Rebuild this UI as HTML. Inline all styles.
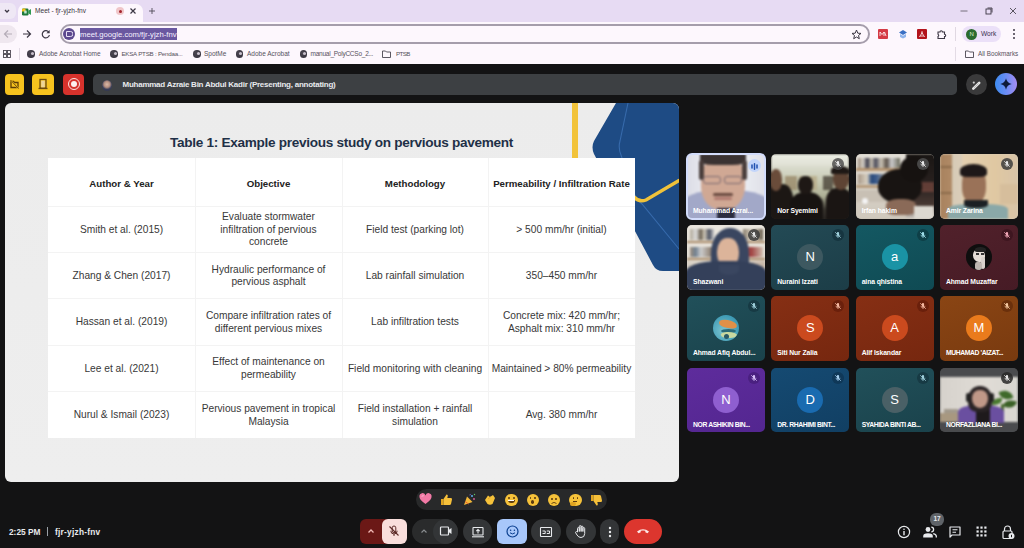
<!DOCTYPE html>
<html><head><meta charset="utf-8">
<style>
*{margin:0;padding:0;box-sizing:border-box}
html,body{width:1024px;height:548px;overflow:hidden;background:#131314;font-family:"Liberation Sans",sans-serif}
.a{position:absolute}
#tabstrip{left:0;top:0;width:1024px;height:22px;background:#e7dbf3}
#toolbar{left:0;top:22px;width:1024px;height:22px;background:#fdf7fd}
#bookmarks{left:0;top:44px;width:1024px;height:20px;background:#fdf7fd}
#meet{left:0;top:64px;width:1024px;height:484px;background:#131314}
.bm{font-size:7px;color:#56515c;top:50px;white-space:nowrap}
.globe{width:7.5px;height:7.5px;border-radius:50%;background:radial-gradient(circle at 35% 35%,#4a4550 0,#3c3844 60%);top:50px;overflow:hidden}
.globe::after{content:"";position:absolute;left:3.5px;top:1.5px;width:3px;height:3px;border-radius:50%;background:#c8c0cc}
.th,.td{display:flex;align-items:center;justify-content:center;text-align:center;white-space:nowrap;padding-top:2.6px}
.th span{font-size:9.7px;font-weight:bold;color:#222}
.td span{font-size:10.2px;color:#383838;line-height:12.8px}
.tile{width:78px;height:64.5px;border-radius:5px}
.av{left:26px;top:19.25px;width:26px;height:26px;border-radius:50%;font-size:13px;text-align:center;line-height:26px}
.mute{right:5px;top:4px;width:12px;height:12px;border-radius:50%;display:flex;align-items:center;justify-content:center}
.tname{left:6px;top:53.3px;font-size:6.8px;font-weight:bold;color:#fff;white-space:nowrap;letter-spacing:-0.1px}
.up{letter-spacing:-0.4px}
.emo{top:493.5px;width:12.5px;height:12.5px;border-radius:50%;background:#f6c23a}
</style></head><body>
<!-- TAB STRIP -->
<div id="tabstrip" class="a"></div>
<div class="a" style="left:0;top:3px;width:16px;height:16px;border-radius:0 6px 6px 0;background:#efe8f5"></div>
<svg class="a" style="left:3px;top:7px" width="8" height="8" viewBox="0 0 8 8"><path d="M2 3 L4 5 L6 3" stroke="#3c3744" stroke-width="1.3" fill="none"/></svg>
<div class="a" style="left:18px;top:4px;width:125px;height:18px;background:#fdf7fd;border-radius:7px 7px 0 0"></div>
<!-- meet icon -->
<svg class="a" style="left:22px;top:7.5px" width="9" height="8" viewBox="0 0 9 8"><rect x="0" y=".5" width="6.5" height="7" rx="1.2" fill="#1e7a3c"/><path d="M0 3.5V1.7Q0 .5 1.2 .5H3.5V3.5Z" fill="#f2c21b"/><path d="M6.3 2.8L9 1V7L6.3 5.2Z" fill="#2f9a50"/><rect x="2.2" y="2.6" width="2.5" height="2.8" rx=".5" fill="#cfeedd" opacity=".9"/></svg>
<div class="a" style="left:35px;top:6.5px;font-size:6.6px;color:#3b3640;white-space:nowrap">Meet - fjr-yjzh-fnv</div>
<div class="a" style="left:116px;top:7px;width:8px;height:8px;border-radius:50%;background:#f0c6c9"></div>
<div class="a" style="left:118.5px;top:9.5px;width:3px;height:3px;border-radius:50%;background:#a3232c"></div>
<svg class="a" style="left:129px;top:7px" width="8" height="8" viewBox="0 0 8 8"><path d="M1.5 1.5L6.5 6.5M6.5 1.5L1.5 6.5" stroke="#3c3744" stroke-width="1.2"/></svg>
<svg class="a" style="left:148px;top:7px" width="8" height="8" viewBox="0 0 8 8"><path d="M4 1V7M1 4H7" stroke="#4a4550" stroke-width=".85"/></svg>
<!-- window controls -->
<svg class="a" style="left:959px;top:6px" width="10" height="10" viewBox="0 0 10 10"><path d="M1.5 5H8.5" stroke="#6a6470" stroke-width=".9"/></svg>
<svg class="a" style="left:984px;top:6px" width="10" height="10" viewBox="0 0 10 10"><rect x="2" y="3" width="5" height="5" stroke="#3c3744" fill="none" stroke-width=".9"/><path d="M3.5 2H8V6.5" stroke="#3c3744" fill="none" stroke-width=".9"/></svg>
<svg class="a" style="left:1008px;top:6px" width="10" height="10" viewBox="0 0 10 10"><path d="M2 2L8 8M8 2L2 8" stroke="#4a4550" stroke-width=".9"/></svg>

<!-- TOOLBAR -->
<div id="toolbar" class="a"></div>
<div class="a" style="left:0;top:25px;width:17px;height:18px;border-radius:0 9px 9px 0;background:#efe7ef"></div>
<svg class="a" style="left:3px;top:29px" width="10" height="10" viewBox="0 0 10 10"><path d="M9 5H1.5M5 1.5L1.5 5L5 8.5" stroke="#b5adb8" stroke-width="1.2" fill="none"/></svg>
<svg class="a" style="left:22px;top:29px" width="10" height="10" viewBox="0 0 10 10"><path d="M1 5H8.5M5 1.5L8.5 5L5 8.5" stroke="#3c3744" stroke-width="1.2" fill="none"/></svg>
<svg class="a" style="left:41px;top:29px" width="10" height="10" viewBox="0 0 10 10"><path d="M8 3.5A3.6 3.6 0 1 0 8.4 6" stroke="#3c3744" stroke-width="1.2" fill="none"/><path d="M8.6 1V4.2H5.4" fill="#3c3744"/></svg>
<div class="a" style="left:60px;top:24px;width:810px;height:20px;border-radius:10px;border:2px solid #a59dab;background:#fdf7fd"></div>
<div class="a" style="left:63px;top:28px;width:12px;height:12px;border-radius:50%;background:#5d4a8f"></div>
<svg class="a" style="left:65px;top:30px" width="8" height="8" viewBox="0 0 8 8"><path d="M1.5 1.5H5.5A2.5 2.5 0 0 1 5.5 6.5H1.5Z" stroke="#e8e0f5" stroke-width="1" fill="none"/></svg>
<div class="a" style="left:80px;top:28px;width:97px;height:12px;background:#6a58a0"></div>
<div class="a" style="left:80px;top:29.5px;font-size:7.7px;color:#f5f0ff;white-space:nowrap">meet.google.com/fjr-yjzh-fnv</div>
<svg class="a" style="left:851px;top:29px" width="11" height="11" viewBox="0 0 11 11"><path d="M5.5 1L6.8 4.2L10 4.4L7.5 6.5L8.3 9.7L5.5 8L2.7 9.7L3.5 6.5L1 4.4L4.2 4.2Z" stroke="#3c3744" stroke-width="1" fill="none" stroke-linejoin="round"/></svg>
<div class="a" style="left:878px;top:29px;width:10px;height:10px;background:#d43a45;border-radius:1px"></div>
<svg class="a" style="left:879px;top:31px" width="8" height="6" viewBox="0 0 8 6"><path d="M1 5V1L3 3.5L5 1V5M5.5 1L7 5" stroke="#fff" stroke-width=".8" fill="none"/></svg>
<svg class="a" style="left:898px;top:29px" width="10" height="10" viewBox="0 0 10 10"><path d="M5 1L9 3.5L5 6L1 3.5Z" fill="#3a6fc4"/><path d="M2 5V8L5 9.5L8 8V5L5 6.7Z" fill="#8fb4ec"/></svg>
<div class="a" style="left:917px;top:29px;width:10px;height:10px;background:#b3141c;border-radius:1px"></div>
<svg class="a" style="left:918px;top:30px" width="8" height="8" viewBox="0 0 8 8"><path d="M1.5 6.5C3 5 4 3 4 1.5C4 3 5 5 6.5 6.5C5 5.8 3 5.8 1.5 6.5Z" stroke="#fff" stroke-width=".8" fill="none"/></svg>
<svg class="a" style="left:936px;top:29px" width="11" height="11" viewBox="0 0 11 11"><path d="M2 3H4A1.2 1.2 0 0 1 6.4 3H8.5V5.2A1.2 1.2 0 0 1 8.5 7.6V9.5H2V7.4A1.2 1.2 0 0 0 2 5.2Z" stroke="#3c3744" stroke-width="1.1" fill="none"/></svg>
<div class="a" style="left:955px;top:27px;width:1px;height:14px;background:#e0d8e2"></div>
<div class="a" style="left:962px;top:26px;width:39px;height:16px;border-radius:8px;background:#ebe0f8"></div>
<div class="a" style="left:966px;top:29px;width:11px;height:11px;border-radius:50%;background:#2b6a2f"></div>
<div class="a" style="left:969.5px;top:31px;font-size:6px;color:#d7f0d0">N</div>
<div class="a" style="left:981px;top:30px;font-size:6.6px;color:#3a3150;white-space:nowrap">Work</div>
<svg class="a" style="left:1011px;top:28px" width="6" height="12" viewBox="0 0 6 12"><circle cx="3" cy="2" r="1" fill="#3c3744"/><circle cx="3" cy="6" r="1" fill="#3c3744"/><circle cx="3" cy="10" r="1" fill="#3c3744"/></svg>

<!-- BOOKMARKS -->
<div id="bookmarks" class="a"></div>
<svg class="a" style="left:3px;top:50px" width="8" height="8" viewBox="0 0 8 8"><rect x=".5" y=".5" width="3" height="3" stroke="#4a4550" stroke-width=".9" fill="none"/><rect x="4.5" y=".5" width="3" height="3" stroke="#4a4550" stroke-width=".9" fill="none"/><rect x=".5" y="4.5" width="3" height="3" stroke="#4a4550" stroke-width=".9" fill="none"/><rect x="4.5" y="4.5" width="3" height="3" stroke="#4a4550" stroke-width=".9" fill="none"/></svg>
<div class="a" style="left:19px;top:48px;width:1px;height:12px;background:#e3dbe5"></div>
<div class="a globe" style="left:27.3px"></div>
<div class="a bm" style="left:39px;font-size:6.47px">Adobe Acrobat Home</div>
<div class="a globe" style="left:110.3px"></div>
<div class="a bm" style="left:121.4px;font-size:6.2px;letter-spacing:-0.22px">EKSA PTSB : Pendaa...</div>
<div class="a globe" style="left:193px"></div>
<div class="a bm" style="left:204px;font-size:6.5px">SpotMe</div>
<div class="a globe" style="left:235.8px"></div>
<div class="a bm" style="left:247px;font-size:6.5px">Adobe Acrobat</div>
<div class="a globe" style="left:299.8px"></div>
<div class="a bm" style="left:310.6px;font-size:6.5px;letter-spacing:-0.25px">manual_PolyCCSo_2...</div>
<svg class="a" style="left:382px;top:50px" width="9" height="8" viewBox="0 0 9 8"><path d="M.5 1H3.5L4.5 2H8.5V7.5H.5Z" stroke="#4a4550" stroke-width=".9" fill="none"/></svg>
<div class="a bm" style="left:396px;font-size:6.2px;letter-spacing:-0.6px">PTSB</div>
<div class="a" style="left:955px;top:47px;width:1px;height:14px;background:#e3dbe5"></div>
<svg class="a" style="left:965px;top:50px" width="9" height="8" viewBox="0 0 9 8"><path d="M.5 1H3.5L4.5 2H8.5V7.5H.5Z" stroke="#4a4550" stroke-width=".9" fill="none"/></svg>
<div class="a bm" style="left:978px;font-size:6.3px">All Bookmarks</div>

<!-- MEET -->
<div id="meet" class="a"></div>
<div class="a" style="left:5px;top:73.5px;width:19px;height:21.5px;border-radius:4px;background:#f6c21e"></div>
<svg class="a" style="left:9px;top:78px" width="11" height="12" viewBox="0 0 11 12"><path d="M2 3.5H4.5L5.5 4.5H9V9.5H2Z" fill="none" stroke="#5a3c08" stroke-width="1.3"/><path d="M1.5 2L9.5 10.5" stroke="#f6c21e" stroke-width="1.6"/><path d="M1.5 2L9.5 10.5" stroke="#5a3c08" stroke-width=".9"/></svg>
<div class="a" style="left:32px;top:73.5px;width:22px;height:21.5px;border-radius:4px;background:#f6c21e"></div>
<svg class="a" style="left:37px;top:78px" width="12" height="12" viewBox="0 0 12 12"><rect x="3" y="1.5" width="6" height="8.5" fill="none" stroke="#6b4a10" stroke-width="1.3"/><rect x="4.2" y="2.6" width="3.6" height="6.8" fill="#ecd49a"/><path d="M1.5 10.5H10.5" stroke="#6b4a10" stroke-width="1.3"/></svg>
<div class="a" style="left:63px;top:73.5px;width:21px;height:21.5px;border-radius:4px;background:#d6322c"></div>
<div class="a" style="left:67.5px;top:78px;width:12px;height:12px;border-radius:50%;border:1.4px solid #fbe3e1"></div>
<div class="a" style="left:70.5px;top:81px;width:6px;height:6px;border-radius:50%;background:#fdf0ef"></div>

<div class="a" style="left:93px;top:74px;width:864px;height:21px;border-radius:5px;background:#3d4043"></div>
<div class="a" style="left:102px;top:79.5px;width:10px;height:11px;border-radius:50%;background:radial-gradient(circle at 50% 40%,#d9b9a8 0,#b58f80 35%,#3a3f5a 60%,#2c3048 100%)"></div>
<div id="pname" class="a" style="left:122.5px;top:80px;font-size:8px;letter-spacing:-0.25px;font-weight:bold;color:#e8eaed;white-space:nowrap">Muhammad Azraie Bin Abdul Kadir (Presenting, annotating)</div>

<div class="a" style="left:965.5px;top:74px;width:21px;height:21px;border-radius:50%;background:#3a3a3b"></div>
<svg class="a" style="left:968px;top:76.5px" width="16" height="16" viewBox="0 0 16 16"><path d="M5.3 11.6L11.2 5.9" stroke="#e6e6e6" stroke-width="2.6" stroke-linecap="round"/><path d="M6.2 10.7L10.3 6.8" stroke="#9a9a9a" stroke-width=".6" stroke-linecap="round"/><circle cx="5.8" cy="5.6" r="1.1" fill="#cfcfcf"/></svg>
<div class="a" style="left:995px;top:73px;width:22px;height:22px;border-radius:50%;background:linear-gradient(90deg,#3d8cf0 0%,#6a8df5 50%,#a58cf2 100%)"></div>
<svg class="a" style="left:999px;top:77px" width="14" height="14" viewBox="0 0 14 14"><path d="M7 1.3Q7.9 6.1 12.7 7Q7.9 7.9 7 12.7Q6.1 7.9 1.3 7Q6.1 6.1 7 1.3Z" fill="#0d1a3a"/></svg>

<!-- SLIDE -->
<div class="a" style="left:5px;top:103px;width:674px;height:379px;border-radius:6px;background:linear-gradient(180deg,#ececec 0%,#eeeeee 100%);overflow:hidden">
  <div class="a" style="left:567px;top:0;width:6px;height:56px;background:#f2c33a"></div>
  <svg class="a" style="left:560px;top:0" width="114" height="175" viewBox="0 0 114 175">
    <path d="M51 0 L114 0 L114 168 L98 168 Q91 168 88 162 L29 51 Q26 44 29 38 Z" fill="#1e4b84"/>
    <path d="M63 0 L55 38 Q53 45 56 52 L68 88 Q71 96 77 101 L114 146" stroke="#3f74b8" stroke-width="1.1" fill="none" opacity=".75"/>
    <path d="M69 94 Q74 99.5 81 97 L114 77.5" stroke="#f0c23a" stroke-width="3.4" fill="none" stroke-linecap="round"/>
  </svg>
  <div id="title" class="a" style="left:165px;top:31.5px;font-size:13.6px;letter-spacing:-0.3px;font-weight:bold;color:#1f3047;white-space:nowrap">Table 1: Example previous study on pervious pavement</div>
</div>
<div class="a" style="left:48px;top:158px;width:587px;height:279.5px;background:#fff"></div>
<!-- TABLE -->
<div class="a" style="left:195px;top:158px;width:1px;height:279.5px;background:#f3f3f3"></div>
<div class="a" style="left:342px;top:158px;width:1px;height:279.5px;background:#f3f3f3"></div>
<div class="a" style="left:488px;top:158px;width:1px;height:279.5px;background:#f3f3f3"></div>
<div class="a" style="left:48px;top:205.5px;width:587px;height:1px;background:#f3f3f3"></div>
<div class="a" style="left:48px;top:251.9px;width:587px;height:1px;background:#f3f3f3"></div>
<div class="a" style="left:48px;top:298.3px;width:587px;height:1px;background:#f3f3f3"></div>
<div class="a" style="left:48px;top:344.7px;width:587px;height:1px;background:#f3f3f3"></div>
<div class="a" style="left:48px;top:391.1px;width:587px;height:1px;background:#f3f3f3"></div>
<div class="a th" style="left:48px;top:158px;width:147px;height:47.5px"><span>Author &amp; Year</span></div>
<div class="a th" style="left:195px;top:158px;width:147px;height:47.5px"><span>Objective</span></div>
<div class="a th" style="left:342px;top:158px;width:146px;height:47.5px"><span>Methodology</span></div>
<div class="a th" style="left:488px;top:158px;width:147px;height:47.5px"><span>Permeability / Infiltration Rate</span></div>
<div class="a td" style="left:48px;top:205.5px;width:147px;height:46.4px"><span>Smith et al. (2015)</span></div>
<div class="a td" style="left:195px;top:205.5px;width:147px;height:46.4px"><span>Evaluate stormwater<br>infiltration of pervious<br>concrete</span></div>
<div class="a td" style="left:342px;top:205.5px;width:146px;height:46.4px"><span>Field test (parking lot)</span></div>
<div class="a td" style="left:488px;top:205.5px;width:147px;height:46.4px"><span>&gt; 500 mm/hr (initial)</span></div>
<div class="a td" style="left:48px;top:251.9px;width:147px;height:46.4px"><span>Zhang &amp; Chen (2017)</span></div>
<div class="a td" style="left:195px;top:251.9px;width:147px;height:46.4px"><span>Hydraulic performance of<br>pervious asphalt</span></div>
<div class="a td" style="left:342px;top:251.9px;width:146px;height:46.4px"><span>Lab rainfall simulation</span></div>
<div class="a td" style="left:488px;top:251.9px;width:147px;height:46.4px"><span>350–450 mm/hr</span></div>
<div class="a td" style="left:48px;top:298.3px;width:147px;height:46.4px"><span>Hassan et al. (2019)</span></div>
<div class="a td" style="left:195px;top:298.3px;width:147px;height:46.4px"><span>Compare infiltration rates of<br>different pervious mixes</span></div>
<div class="a td" style="left:342px;top:298.3px;width:146px;height:46.4px"><span>Lab infiltration tests</span></div>
<div class="a td" style="left:488px;top:298.3px;width:147px;height:46.4px"><span>Concrete mix: 420 mm/hr;<br>Asphalt mix: 310 mm/hr</span></div>
<div class="a td" style="left:48px;top:344.7px;width:147px;height:46.4px"><span>Lee et al. (2021)</span></div>
<div class="a td" style="left:195px;top:344.7px;width:147px;height:46.4px"><span>Effect of maintenance on<br>permeability</span></div>
<div class="a td" style="left:342px;top:344.7px;width:146px;height:46.4px"><span>Field monitoring with cleaning</span></div>
<div class="a td" style="left:488px;top:344.7px;width:147px;height:46.4px"><span>Maintained &gt; 80% permeability</span></div>
<div class="a td" style="left:48px;top:391.1px;width:147px;height:46.4px"><span>Nurul &amp; Ismail (2023)</span></div>
<div class="a td" style="left:195px;top:391.1px;width:147px;height:46.4px"><span>Pervious pavement in tropical<br>Malaysia</span></div>
<div class="a td" style="left:342px;top:391.1px;width:146px;height:46.4px"><span>Field installation + rainfall<br>simulation</span></div>
<div class="a td" style="left:488px;top:391.1px;width:147px;height:46.4px"><span>Avg. 380 mm/hr</span></div>
<!-- BOTTOM -->
<div class="a" style="left:9px;top:526.5px;font-size:8.3px;font-weight:bold;color:#e8eaed;white-space:nowrap">2:25 PM</div>
<div class="a" style="left:47px;top:527px;width:1px;height:9px;background:#9aa0a6"></div>
<div class="a" style="left:55px;top:526.5px;font-size:8.3px;letter-spacing:.25px;font-weight:bold;color:#e8eaed;white-space:nowrap">fjr-yjzh-fnv</div>

<div class="a" style="left:415.5px;top:489px;width:191.5px;height:21px;border-radius:10.5px;background:#28292a"></div>
<!-- heart -->
<svg class="a" style="left:418.5px;top:493px" width="13" height="12" viewBox="0 0 13 12"><path d="M6.5 11C2 7.8 .5 5.8 .5 3.8A2.9 2.9 0 0 1 6.5 2.6A2.9 2.9 0 0 1 12.5 3.8C12.5 5.8 11 7.8 6.5 11Z" fill="#f27aa6"/><path d="M3 3.5A1.2 1.2 0 0 1 4.5 2.8" stroke="#ffd0e0" stroke-width="1" fill="none"/></svg>
<!-- thumbs up -->
<svg class="a" style="left:440px;top:492.5px" width="13" height="13" viewBox="0 0 13 13"><path d="M1 6H3.5V12H1Z" fill="#e0a420"/><path d="M3.5 6L6.5 1.5Q8 1.3 7.8 3L7.3 5H11Q12.3 5.2 12 6.5L11 11Q10.6 12 9.6 12H3.5Z" fill="#f6c03a"/></svg>
<!-- party popper -->
<svg class="a" style="left:462.5px;top:493px" width="13" height="13" viewBox="0 0 13 13"><path d="M1 12L4 3.5L9.5 9Z" fill="#f2b83a"/><path d="M2.2 8.6L5.5 11" stroke="#e86030" stroke-width="1"/><circle cx="9" cy="3" r="1" fill="#5ab0f0"/><circle cx="11" cy="6" r=".9" fill="#e060a0"/><path d="M6.5 2Q7.5 .8 8 2.2" stroke="#8060d0" stroke-width=".9" fill="none"/><circle cx="11.5" cy="1.5" r=".7" fill="#60c060"/></svg>
<!-- clap -->
<svg class="a" style="left:483px;top:493px" width="13" height="13" viewBox="0 0 13 13"><path d="M2 7L5 2.5L7 4L10 2L12 5L9.5 11Q7 12.5 4.5 11Z" fill="#f6c23a"/><path d="M5 6L8 3.5" stroke="#d89a20" stroke-width=".7"/></svg>
<!-- grin -->
<div class="a emo" style="left:505px"><div class="a" style="left:3px;top:3.5px;width:2px;height:1.6px;border-radius:1px;background:#5a3a10"></div><div class="a" style="left:7.5px;top:3.5px;width:2px;height:1.6px;border-radius:1px;background:#5a3a10"></div><div class="a" style="left:2.5px;top:6.5px;width:7.5px;height:3.3px;border-radius:0 0 4px 4px;background:#5a3a10"></div><div class="a" style="left:3.2px;top:6.7px;width:6px;height:1.2px;background:#fff"></div></div>
<!-- wow -->
<div class="a emo" style="left:526.5px"><div class="a" style="left:3.2px;top:3px;width:1.8px;height:2.4px;border-radius:50%;background:#5a3a10"></div><div class="a" style="left:7.5px;top:3px;width:1.8px;height:2.4px;border-radius:50%;background:#5a3a10"></div><div class="a" style="left:4.6px;top:6.5px;width:3.4px;height:4px;border-radius:50%;background:#5a3a10"></div></div>
<!-- sad -->
<div class="a emo" style="left:547.8px"><div class="a" style="left:3.2px;top:4px;width:1.8px;height:2px;border-radius:50%;background:#5a3a10"></div><div class="a" style="left:7.5px;top:4px;width:1.8px;height:2px;border-radius:50%;background:#5a3a10"></div><svg class="a" style="left:3.5px;top:7.5px" width="6" height="3" viewBox="0 0 6 3"><path d="M.5 2.5Q3 .3 5.5 2.5" stroke="#5a3a10" stroke-width=".9" fill="none"/></svg></div>
<!-- thinking -->
<div class="a emo" style="left:569px"><div class="a" style="left:3.5px;top:3px;width:1.8px;height:2px;border-radius:50%;background:#5a3a10"></div><div class="a" style="left:7.5px;top:3px;width:1.8px;height:2px;border-radius:50%;background:#5a3a10"></div><div class="a" style="left:4px;top:7px;width:4px;height:1px;background:#5a3a10"></div><div class="a" style="left:.5px;top:8px;width:6px;height:4px;border-radius:2px;background:#e0a420"></div></div>
<!-- thumbs down -->
<svg class="a" style="left:590px;top:493.5px" width="13" height="13" viewBox="0 0 13 13"><path d="M1 1H3.5V7H1Z" fill="#e0a420"/><path d="M3.5 7L6.5 11.5Q8 11.7 7.8 10L7.3 8H11Q12.3 7.8 12 6.5L11 2Q10.6 1 9.6 1H3.5Z" fill="#f6c03a"/></svg>

<!-- controls -->
<div class="a" style="left:359.5px;top:518.5px;width:30px;height:25.5px;border-radius:6px 0 0 6px;background:#6b1816"></div>
<svg class="a" style="left:366px;top:527px" width="10" height="8" viewBox="0 0 10 8"><path d="M2.5 5.5L5 3L7.5 5.5" stroke="#f2b8b5" stroke-width="1.3" fill="none"/></svg>
<div class="a" style="left:381.5px;top:518.5px;width:25.5px;height:25.5px;border-radius:6px;background:#f9dedc"></div>
<svg class="a" style="left:387px;top:524px" width="14" height="14" viewBox="0 0 14 14"><path d="M7 2A1.8 1.8 0 0 1 8.8 3.8V7A1.8 1.8 0 0 1 5.2 7V3.8A1.8 1.8 0 0 1 7 2Z" stroke="#5c2a28" stroke-width="1" fill="none"/><path d="M3.8 6.8A3.2 3.2 0 0 0 10.2 6.8M7 10V12" stroke="#5c2a28" stroke-width="1" fill="none"/><path d="M2.5 2.5L11.5 11.5" stroke="#5c2a28" stroke-width="1.1"/></svg>

<div class="a" style="left:411.5px;top:518.5px;width:46.5px;height:25.5px;border-radius:13px;background:#2a2b2c"></div>
<div class="a" style="left:432.5px;top:518.5px;width:25.5px;height:25.5px;border-radius:50%;background:#333537"></div>
<svg class="a" style="left:419px;top:527px" width="10" height="8" viewBox="0 0 10 8"><path d="M2.5 5.5L5 3L7.5 5.5" stroke="#8a8d90" stroke-width="1.2" fill="none"/></svg>
<svg class="a" style="left:438.5px;top:525px" width="14" height="12" viewBox="0 0 14 12"><rect x="1.5" y="2" width="8" height="8" rx=".8" stroke="#e8eaed" stroke-width="1.2" fill="none"/><path d="M9.5 5L12.5 3V9L9.5 7Z" fill="#e8eaed"/></svg>

<div class="a" style="left:463px;top:518.5px;width:29px;height:25.5px;border-radius:13px;background:#333537"></div>
<svg class="a" style="left:470.5px;top:524.5px" width="14" height="14" viewBox="0 0 14 14"><rect x="2" y="2.5" width="10" height="7.5" rx=".5" stroke="#e8eaed" stroke-width="1.1" fill="none"/><path d="M1 11.8H13" stroke="#e8eaed" stroke-width="1.1"/><path d="M7 8.5V4.5M5.3 6.2L7 4.5L8.7 6.2" stroke="#e8eaed" stroke-width="1.1" fill="none"/></svg>

<div class="a" style="left:497px;top:518.5px;width:30px;height:25.5px;border-radius:6px;background:#a8c7fa"></div>
<svg class="a" style="left:504.5px;top:523.5px" width="15" height="15" viewBox="0 0 15 15"><circle cx="7.5" cy="7.5" r="5.5" stroke="#0b3f8f" stroke-width="1.2" fill="none"/><circle cx="5.6" cy="6.3" r=".8" fill="#0b3f8f"/><circle cx="9.4" cy="6.3" r=".8" fill="#0b3f8f"/><path d="M5 8.8Q7.5 11 10 8.8" stroke="#0b3f8f" stroke-width="1" fill="none"/></svg>

<div class="a" style="left:531.3px;top:518.5px;width:30px;height:25.5px;border-radius:13px;background:#333537"></div>
<svg class="a" style="left:539.3px;top:524.5px" width="14" height="14" viewBox="0 0 14 14"><rect x="1.5" y="2.5" width="11" height="9" rx=".6" stroke="#e8eaed" stroke-width="1.1" fill="none"/><path d="M3.5 6H6.2V8.5H3.5M7.8 6H10.5V8.5H7.8" stroke="#e8eaed" stroke-width="1" fill="none"/></svg>

<div class="a" style="left:565.6px;top:518.5px;width:30px;height:25.5px;border-radius:13px;background:#333537"></div>
<svg class="a" style="left:573.6px;top:523.5px" width="14" height="15" viewBox="0 0 14 15"><path d="M3.5 8V4.5A.9.9 0 0 1 5.3 4.5V7.5V2.5A.9.9 0 0 1 7.1 2.5V7.5V3A.9.9 0 0 1 8.9 3V7.5V4.5A.9.9 0 0 1 10.7 4.5V9.5Q10.7 13.5 7 13.5Q4.5 13.5 3 11L1.5 8.5A.9.9 0 0 1 3 7.8Z" stroke="#e8eaed" stroke-width="1" fill="none" stroke-linejoin="round"/></svg>

<div class="a" style="left:599.8px;top:518.5px;width:19.5px;height:25.5px;border-radius:10px;background:#333537"></div>
<svg class="a" style="left:606.5px;top:524.5px" width="6" height="14" viewBox="0 0 6 14"><circle cx="3" cy="3" r="1.2" fill="#e8eaed"/><circle cx="3" cy="7" r="1.2" fill="#e8eaed"/><circle cx="3" cy="11" r="1.2" fill="#e8eaed"/></svg>

<div class="a" style="left:623.6px;top:518.5px;width:38.6px;height:25.5px;border-radius:13px;background:#dc362e"></div>
<svg class="a" style="left:635px;top:526px" width="16" height="10" viewBox="0 0 16 10"><path d="M2 5.5Q8 1 14 5.5L12.5 7.3L10.3 6.3V4.8Q8 4 5.7 4.8V6.3L3.5 7.3Z" fill="#fde8e6"/></svg>

<!-- right icons -->
<svg class="a" style="left:896.5px;top:525px" width="14" height="14" viewBox="0 0 14 14"><circle cx="7" cy="7" r="5.6" stroke="#e8eaed" stroke-width="1.2" fill="none"/><path d="M7 6V10.2" stroke="#e8eaed" stroke-width="1.4"/><circle cx="7" cy="4.2" r=".8" fill="#e8eaed"/></svg>
<svg class="a" style="left:921.5px;top:524.5px" width="16" height="14" viewBox="0 0 16 14"><circle cx="6" cy="4.5" r="2.4" fill="#e8eaed"/><path d="M1.2 12.5V11Q1.2 8.3 6 8.3Q10.8 8.3 10.8 11V12.5Z" fill="#e8eaed"/><path d="M9.3 2.2A2.3 2.3 0 0 1 9.3 6.8" stroke="#e8eaed" stroke-width="1.3" fill="none"/><path d="M11.2 8.6Q14.3 9.2 14.3 11.3V12.5" stroke="#e8eaed" stroke-width="1.3" fill="none"/></svg>
<div class="a" style="left:930px;top:513px;width:14px;height:12.5px;border-radius:6px;background:#5f6368"></div>
<div class="a" style="left:930px;top:515px;width:14px;text-align:center;font-size:6.5px;font-weight:bold;color:#e8eaed">17</div>
<svg class="a" style="left:948px;top:524.5px" width="14" height="14" viewBox="0 0 14 14"><path d="M2 2H12V10H4L2 12Z" stroke="#e8eaed" stroke-width="1.2" fill="none" stroke-linejoin="round"/><path d="M4.5 4.8H9.5M4.5 7.2H8" stroke="#e8eaed" stroke-width="1.1"/></svg>
<svg class="a" style="left:974.5px;top:525px" width="13" height="13" viewBox="0 0 13 13"><g fill="#e8eaed"><rect x="1.5" y="1.5" width="2.2" height="2.2"/><rect x="5.4" y="1.5" width="2.2" height="2.2"/><rect x="9.3" y="1.5" width="2.2" height="2.2"/><rect x="1.5" y="5.4" width="2.2" height="2.2"/><rect x="5.4" y="5.4" width="2.2" height="2.2"/><rect x="9.3" y="5.4" width="2.2" height="2.2"/><rect x="1.5" y="9.3" width="2.2" height="2.2"/><rect x="5.4" y="9.3" width="2.2" height="2.2"/><rect x="9.3" y="9.3" width="2.2" height="2.2"/></g></svg>
<svg class="a" style="left:999.5px;top:523.5px" width="16" height="16" viewBox="0 0 16 16"><path d="M4.5 7V5A3 3 0 0 1 10.5 5V7" stroke="#e8eaed" stroke-width="1.2" fill="none"/><rect x="3" y="7" width="9" height="7.5" rx="1" stroke="#e8eaed" stroke-width="1.2" fill="none"/><circle cx="11.5" cy="12" r="3" fill="#e8eaed"/><path d="M11.5 10.8V13.2" stroke="#131314" stroke-width="1"/></svg>

<!-- GRID -->
<div class="a tile" style="left:687px;top:154px;background:#dfe2ee"><div class="a" style="left:0;top:0;width:78px;height:64.5px;overflow:hidden;border-radius:5px"><div class="a" style="left:0;top:0;width:78px;height:64.5px;filter:blur(.9px)"><div class="a" style="left:0px;top:0px;width:78px;height:64.5px;background:linear-gradient(90deg,#dcdde6 0%,#ecedf2 30%,#eceef3 70%,#dfe0e8 100%);"></div><div class="a" style="left:-6px;top:36px;width:90px;height:32px;background:#a2a8c8;border-radius:45% 45% 0 0"></div><div class="a" style="left:14px;top:4px;width:44px;height:52px;background:#d0a894;border-radius:38% 38% 45% 45%"></div><div class="a" style="left:13px;top:0px;width:46px;height:11px;background:#3a3232;border-radius:0 0 30% 30%"></div><div class="a" style="left:12px;top:6px;width:5px;height:20px;background:#4a3e3c;border-radius:3px"></div><div class="a" style="left:55px;top:6px;width:5px;height:20px;background:#4a3e3c;border-radius:3px"></div><div class="a" style="left:16px;top:22px;width:18px;height:8px;border:1px solid #7a6a70;border-radius:3px"></div><div class="a" style="left:37px;top:22px;width:18px;height:8px;border:1px solid #7a6a70;border-radius:3px"></div><div class="a" style="left:26px;top:39px;width:20px;height:3px;background:#6a4a40;border-radius:2px"></div><div class="a" style="left:27px;top:43px;width:18px;height:3px;background:#b07a70;border-radius:2px"></div><div class="a" style="left:30px;top:54px;width:18px;height:11px;background:#2a2c40;"></div></div></div><div class="a" style="left:-1px;top:-1px;width:80px;height:66.5px;border:2px solid #d2dcfb;border-radius:6px"></div><div class="a" style="right:4.5px;top:4.5px;width:13px;height:13px;border-radius:50%;background:#c3d5fa"><svg width="13" height="13" viewBox="0 0 13 13"><path d="M4 5V8M6.5 3.8V9.2M9 5V8" stroke="#1f4fb0" stroke-width="1.5" stroke-linecap="round"/></svg></div><div class="a tname">Muhammad Azrai...</div></div>
<div class="a tile" style="left:771.3px;top:154px;background:#2a2622"><div class="a" style="left:0;top:0;width:78px;height:64.5px;overflow:hidden;border-radius:5px"><div class="a" style="left:0;top:0;width:78px;height:64.5px;filter:blur(.9px)"><div class="a" style="left:0px;top:0px;width:78px;height:64.5px;background:linear-gradient(180deg,#e4e6da 0%,#d8dacb 22%,#c4c6ae 45%,#aeb096 65%,#3a3630 85%,#2a2622 100%);"></div><div class="a" style="left:0px;top:0px;width:78px;height:12px;background:linear-gradient(180deg,#eceee4,#dfe0d4);"></div><div class="a" style="left:14px;top:22px;width:12px;height:14px;background:#9a8a6a;opacity:.8"></div><div class="a" style="left:28px;top:22px;width:18px;height:14px;background:#b8ab88;opacity:.8"></div><div class="a" style="left:52px;top:22px;width:10px;height:14px;background:#4a4438;opacity:.8"></div><div class="a" style="left:-4px;top:30px;width:26px;height:36px;background:#1c1714;border-radius:40% 40% 0 0"></div><div class="a" style="left:-1px;top:15px;width:12px;height:22px;background:#6a4c3a;border-radius:45%"></div><div class="a" style="left:19px;top:38px;width:33px;height:28px;background:#171311;border-radius:45% 45% 0 0"></div><div class="a" style="left:27px;top:22px;width:15px;height:18px;background:#1e1815;border-radius:45%"></div><div class="a" style="left:55px;top:34px;width:26px;height:32px;background:#1a1513;border-radius:40% 40% 0 0"></div><div class="a" style="left:62px;top:14px;width:16px;height:22px;background:#5e4434;border-radius:45%"></div><div class="a" style="left:60px;top:12px;width:18px;height:8px;background:#1e1815;border-radius:50% 50% 0 0"></div></div></div><div class="a mute" style="background:rgba(70,70,70,.8)"><svg width="8" height="8" viewBox="0 0 8 8"><path d="M4 1A1.1 1.1 0 0 1 5.1 2.1V4A1.1 1.1 0 0 1 2.9 4V2.1A1.1 1.1 0 0 1 4 1Z" fill="#e8e8e8"/><path d="M2 3.8A2 2 0 0 0 6 3.8M4 5.9V7" stroke="#e8e8e8" stroke-width=".7" fill="none"/><path d="M1.2 1.2L6.8 6.8" stroke="#e8e8e8" stroke-width=".8"/></svg></div><div class="a tname">Nor Syemimi</div></div>
<div class="a tile" style="left:855.7px;top:154px;background:#c2bdb2"><div class="a" style="left:0;top:0;width:78px;height:64.5px;overflow:hidden;border-radius:5px"><div class="a" style="left:0;top:0;width:78px;height:64.5px;filter:blur(.9px)"><div class="a" style="left:0px;top:0px;width:78px;height:64.5px;background:linear-gradient(180deg,#e4e0d8 0%,#d8d2c8 50%,#cfc8bc 100%);"></div><div class="a" style="left:2px;top:4px;width:42px;height:10px;background:linear-gradient(90deg,#9a8a7a 0%,#d8d2c8 12%,#3a3a4a 22%,#c8c0b0 32%,#4a4a5a 42%,#d0c8b8 55%,#5a5048 68%,#ccc 80%,#6a6a5a 100%);"></div><div class="a" style="left:0px;top:14px;width:78px;height:2.5px;background:#b49470;"></div><div class="a" style="left:2px;top:20px;width:30px;height:10px;background:linear-gradient(90deg,#a89888 0%,#d8d0c0 30%,#2a4a7a 45%,#3a5a8a 60%,#b8b0a0 100%);"></div><div class="a" style="left:0px;top:31px;width:78px;height:2.5px;background:#b49a7a;"></div><div class="a" style="left:0px;top:36px;width:40px;height:12px;background:#c8c0b4;"></div><div class="a" style="left:6.5px;top:44px;width:6px;height:6px;background:#f4f4f4;border-radius:50%"></div><div class="a" style="left:50px;top:0px;width:30px;height:64.5px;background:linear-gradient(180deg,#1a1614 0%,#2a2220 50%,#4a3a34 80%,#d8d4cc 100%);"></div><div class="a" style="left:62px;top:28px;width:16px;height:10px;background:#7a4a40;opacity:.7"></div><div class="a" style="left:22px;top:15px;width:44px;height:34px;background:#181412;border-radius:50% 50% 45% 45%"></div><div class="a" style="left:44px;top:2px;width:28px;height:26px;background:#161210;border-radius:50%"></div><div class="a" style="left:30px;top:45px;width:30px;height:16px;background:#8a6a58;border-radius:40% 40% 30% 30%"></div><div class="a" style="left:58px;top:52px;width:20px;height:13px;background:#dcd8d0;"></div></div></div><div class="a mute" style="background:rgba(80,80,80,.85)"><svg width="8" height="8" viewBox="0 0 8 8"><path d="M4 1A1.1 1.1 0 0 1 5.1 2.1V4A1.1 1.1 0 0 1 2.9 4V2.1A1.1 1.1 0 0 1 4 1Z" fill="#e8e8e8"/><path d="M2 3.8A2 2 0 0 0 6 3.8M4 5.9V7" stroke="#e8e8e8" stroke-width=".7" fill="none"/><path d="M1.2 1.2L6.8 6.8" stroke="#e8e8e8" stroke-width=".8"/></svg></div><div class="a tname">Irfan hakim</div></div>
<div class="a tile" style="left:940px;top:154px;background:#d9cdb8"><div class="a" style="left:0;top:0;width:78px;height:64.5px;overflow:hidden;border-radius:5px"><div class="a" style="left:0;top:0;width:78px;height:64.5px;filter:blur(.9px)"><div class="a" style="left:0px;top:0px;width:78px;height:64.5px;background:linear-gradient(90deg,#a8825e 0%,#b08a66 15%,#d6cab6 16%,#dacdb8 28%,#e4d0b0 29%,#e0c8a2 70%,#d8c4a8 100%);"></div><div class="a" style="left:0px;top:12px;width:12px;height:2px;background:#8a6a4a;"></div><div class="a" style="left:0px;top:38px;width:12px;height:2px;background:#8a6a4a;"></div><div class="a" style="left:60px;top:30px;width:18px;height:20px;background:#d4bc9a;opacity:.8"></div><div class="a" style="left:22px;top:14px;width:24px;height:36px;background:#9a7258;border-radius:40% 40% 45% 45%"></div><div class="a" style="left:20px;top:10px;width:27px;height:13px;background:#1e1818;border-radius:50% 50% 25% 25%"></div><div class="a" style="left:8px;top:50px;width:60px;height:15px;background:#8aa8a8;border-radius:35% 35% 0 0"></div><div class="a" style="left:24px;top:46px;width:24px;height:8px;background:#1c2024;border-radius:0 0 40% 40%"></div></div></div><div class="a mute" style="background:rgba(60,60,60,.85)"><svg width="8" height="8" viewBox="0 0 8 8"><path d="M4 1A1.1 1.1 0 0 1 5.1 2.1V4A1.1 1.1 0 0 1 2.9 4V2.1A1.1 1.1 0 0 1 4 1Z" fill="#e8e8e8"/><path d="M2 3.8A2 2 0 0 0 6 3.8M4 5.9V7" stroke="#e8e8e8" stroke-width=".7" fill="none"/><path d="M1.2 1.2L6.8 6.8" stroke="#e8e8e8" stroke-width=".8"/></svg></div><div class="a tname">Amir Zarina</div></div>
<div class="a tile" style="left:687px;top:225px;background:#dcd6cc"><div class="a" style="left:0;top:0;width:78px;height:64.5px;overflow:hidden;border-radius:5px"><div class="a" style="left:0;top:0;width:78px;height:64.5px;filter:blur(.9px)"><div class="a" style="left:0px;top:0px;width:78px;height:64.5px;background:linear-gradient(180deg,#ece8e0 0%,#ded8ce 100%);"></div><div class="a" style="left:3px;top:4px;width:24px;height:11px;background:linear-gradient(90deg,#b0a898 0%,#ddd 25%,#6a6050 45%,#d0c8b8 60%,#4a5060 80%,#ccc 100%);"></div><div class="a" style="left:56px;top:4px;width:20px;height:11px;background:linear-gradient(90deg,#8a8070 0%,#d0c8b8 40%,#6a6050 100%);"></div><div class="a" style="left:0px;top:15.5px;width:78px;height:2px;background:#a88a68;"></div><div class="a" style="left:3px;top:22px;width:22px;height:10px;background:linear-gradient(90deg,#a09080 0%,#708090 25%,#ccc 50%,#8a7a6a 100%);"></div><div class="a" style="left:56px;top:22px;width:20px;height:10px;background:linear-gradient(90deg,#c06050 0%,#a04040 40%,#d0c0b0 100%);"></div><div class="a" style="left:0px;top:33px;width:78px;height:2px;background:#a88a68;"></div><div class="a" style="left:0px;top:36px;width:78px;height:20px;background:linear-gradient(90deg,#d8d0c4,#e4ded4,#c8b8a8);"></div><div class="a" style="left:24px;top:3px;width:38px;height:52px;background:#3a4660;border-radius:48% 48% 30% 30%"></div><div class="a" style="left:30px;top:13px;width:22px;height:30px;background:#dcb49a;border-radius:45% 45% 50% 50%"></div><div class="a" style="left:-2px;top:36px;width:82px;height:30px;background:#34405a;border-radius:40% 40% 0 0"></div><div class="a" style="left:32px;top:40px;width:20px;height:10px;background:#3a4660;border-radius:0 0 50% 50%"></div></div></div><div class="a mute" style="background:rgba(60,60,60,.85)"><svg width="8" height="8" viewBox="0 0 8 8"><path d="M4 1A1.1 1.1 0 0 1 5.1 2.1V4A1.1 1.1 0 0 1 2.9 4V2.1A1.1 1.1 0 0 1 4 1Z" fill="#e8e8e8"/><path d="M2 3.8A2 2 0 0 0 6 3.8M4 5.9V7" stroke="#e8e8e8" stroke-width=".7" fill="none"/><path d="M1.2 1.2L6.8 6.8" stroke="#e8e8e8" stroke-width=".8"/></svg></div><div class="a tname">Shazwani</div></div>
<div class="a tile" style="left:771.3px;top:225px;background:linear-gradient(160deg,#234a55 0%,#1c3d47 100%)"><div class="a av" style="background:#3d5860;color:#fff">N</div><div class="a mute" style="background:#163540"><svg width="8" height="8" viewBox="0 0 8 8"><path d="M4 1A1.1 1.1 0 0 1 5.1 2.1V4A1.1 1.1 0 0 1 2.9 4V2.1A1.1 1.1 0 0 1 4 1Z" fill="#9fd0dc"/><path d="M2 3.8A2 2 0 0 0 6 3.8M4 5.9V7" stroke="#9fd0dc" stroke-width=".7" fill="none"/><path d="M1.2 1.2L6.8 6.8" stroke="#9fd0dc" stroke-width=".8"/></svg></div><div class="a tname">Nuraini Izzati</div></div>
<div class="a tile" style="left:855.7px;top:225px;background:linear-gradient(160deg,#145862 0%,#0f4a53 100%)"><div class="a av" style="background:#1a93a5;color:#fff">a</div><div class="a mute" style="background:#0e3f47"><svg width="8" height="8" viewBox="0 0 8 8"><path d="M4 1A1.1 1.1 0 0 1 5.1 2.1V4A1.1 1.1 0 0 1 2.9 4V2.1A1.1 1.1 0 0 1 4 1Z" fill="#9fdde8"/><path d="M2 3.8A2 2 0 0 0 6 3.8M4 5.9V7" stroke="#9fdde8" stroke-width=".7" fill="none"/><path d="M1.2 1.2L6.8 6.8" stroke="#9fdde8" stroke-width=".8"/></svg></div><div class="a tname">aina qhistina</div></div>
<div class="a tile" style="left:940px;top:225px;background:linear-gradient(160deg,#51212b 0%,#461b25 100%)"><div class="a av" style="background:#0e0e0e;overflow:hidden"><div class="a" style="left:7px;top:5px;width:12px;height:13px;background:#e4ddd6;border-radius:45% 50% 40% 50%"></div><div class="a" style="left:9px;top:3px;width:11px;height:5px;background:#222;border-radius:50% 50% 20% 20%"></div><div class="a" style="left:10px;top:9px;width:3px;height:1.5px;background:#333;"></div><div class="a" style="left:15px;top:9px;width:3px;height:1.5px;background:#333;"></div><div class="a" style="left:15px;top:13px;width:4px;height:12px;background:#d8d2cc;border-radius:2px"></div><div class="a" style="left:9px;top:18px;width:7px;height:8px;background:#bdb6b0;border-radius:30%"></div></div><div class="a mute" style="background:#3e1620"><svg width="8" height="8" viewBox="0 0 8 8"><path d="M4 1A1.1 1.1 0 0 1 5.1 2.1V4A1.1 1.1 0 0 1 2.9 4V2.1A1.1 1.1 0 0 1 4 1Z" fill="#f0a6b6"/><path d="M2 3.8A2 2 0 0 0 6 3.8M4 5.9V7" stroke="#f0a6b6" stroke-width=".7" fill="none"/><path d="M1.2 1.2L6.8 6.8" stroke="#f0a6b6" stroke-width=".8"/></svg></div><div class="a tname">Ahmad Muzaffar</div></div>
<div class="a tile" style="left:687px;top:296px;background:linear-gradient(160deg,#21505a 0%,#1a424b 100%)"><div class="a av" style="background:radial-gradient(circle at 40% 60%,#7cc4d0 0,#3e9ab4 70%);overflow:hidden"><div class="a" style="left:6px;top:5px;width:18px;height:8px;background:#e09048;border-radius:50% 60% 40% 50%;transform:rotate(10deg)"></div><div class="a" style="left:8px;top:14px;width:15px;height:4px;background:#2a6a78;border-radius:50%"></div><div class="a" style="left:8px;top:17px;width:16px;height:6px;background:#c8d8a0;border-radius:40% 60% 50% 50%"></div><div class="a" style="left:11px;top:19px;width:5px;height:5px;background:#2a5a68;border-radius:50%"></div></div><div class="a mute" style="background:#173a44"><svg width="8" height="8" viewBox="0 0 8 8"><path d="M4 1A1.1 1.1 0 0 1 5.1 2.1V4A1.1 1.1 0 0 1 2.9 4V2.1A1.1 1.1 0 0 1 4 1Z" fill="#9fd0dc"/><path d="M2 3.8A2 2 0 0 0 6 3.8M4 5.9V7" stroke="#9fd0dc" stroke-width=".7" fill="none"/><path d="M1.2 1.2L6.8 6.8" stroke="#9fd0dc" stroke-width=".8"/></svg></div><div class="a tname">Ahmad Afiq Abdul...</div></div>
<div class="a tile" style="left:771.3px;top:296px;background:linear-gradient(160deg,#862f14 0%,#76270f 100%)"><div class="a av" style="background:#cb4a1e;color:#fff">S</div><div class="a mute" style="background:#6a200c"><svg width="8" height="8" viewBox="0 0 8 8"><path d="M4 1A1.1 1.1 0 0 1 5.1 2.1V4A1.1 1.1 0 0 1 2.9 4V2.1A1.1 1.1 0 0 1 4 1Z" fill="#f5b8a0"/><path d="M2 3.8A2 2 0 0 0 6 3.8M4 5.9V7" stroke="#f5b8a0" stroke-width=".7" fill="none"/><path d="M1.2 1.2L6.8 6.8" stroke="#f5b8a0" stroke-width=".8"/></svg></div><div class="a tname">Siti Nur Zalia</div></div>
<div class="a tile" style="left:855.7px;top:296px;background:linear-gradient(160deg,#862f14 0%,#76270f 100%)"><div class="a av" style="background:#cb4a1e;color:#fff">A</div><div class="a mute" style="background:#6a200c"><svg width="8" height="8" viewBox="0 0 8 8"><path d="M4 1A1.1 1.1 0 0 1 5.1 2.1V4A1.1 1.1 0 0 1 2.9 4V2.1A1.1 1.1 0 0 1 4 1Z" fill="#f5b8a0"/><path d="M2 3.8A2 2 0 0 0 6 3.8M4 5.9V7" stroke="#f5b8a0" stroke-width=".7" fill="none"/><path d="M1.2 1.2L6.8 6.8" stroke="#f5b8a0" stroke-width=".8"/></svg></div><div class="a tname">Alif Iskandar</div></div>
<div class="a tile" style="left:940px;top:296px;background:linear-gradient(160deg,#8a4514 0%,#793a0f 100%)"><div class="a av" style="background:#ea7b1c;color:#fff">M</div><div class="a mute" style="background:#6a300c"><svg width="8" height="8" viewBox="0 0 8 8"><path d="M4 1A1.1 1.1 0 0 1 5.1 2.1V4A1.1 1.1 0 0 1 2.9 4V2.1A1.1 1.1 0 0 1 4 1Z" fill="#f5c8a0"/><path d="M2 3.8A2 2 0 0 0 6 3.8M4 5.9V7" stroke="#f5c8a0" stroke-width=".7" fill="none"/><path d="M1.2 1.2L6.8 6.8" stroke="#f5c8a0" stroke-width=".8"/></svg></div><div class="a tname up">MUHAMAD 'AIZAT...</div></div>
<div class="a tile" style="left:687px;top:367.5px;background:linear-gradient(160deg,#5e2c9c 0%,#532690 100%)"><div class="a av" style="background:#8f5fd0;color:#fff">N</div><div class="a mute" style="background:#4a2080"><svg width="8" height="8" viewBox="0 0 8 8"><path d="M4 1A1.1 1.1 0 0 1 5.1 2.1V4A1.1 1.1 0 0 1 2.9 4V2.1A1.1 1.1 0 0 1 4 1Z" fill="#d8c0f8"/><path d="M2 3.8A2 2 0 0 0 6 3.8M4 5.9V7" stroke="#d8c0f8" stroke-width=".7" fill="none"/><path d="M1.2 1.2L6.8 6.8" stroke="#d8c0f8" stroke-width=".8"/></svg></div><div class="a tname up">NOR ASHIKIN BIN...</div></div>
<div class="a tile" style="left:771.3px;top:367.5px;background:linear-gradient(160deg,#154a72 0%,#113f63 100%)"><div class="a av" style="background:#1a6bb0;color:#fff">D</div><div class="a mute" style="background:#0f3858"><svg width="8" height="8" viewBox="0 0 8 8"><path d="M4 1A1.1 1.1 0 0 1 5.1 2.1V4A1.1 1.1 0 0 1 2.9 4V2.1A1.1 1.1 0 0 1 4 1Z" fill="#a8d0f0"/><path d="M2 3.8A2 2 0 0 0 6 3.8M4 5.9V7" stroke="#a8d0f0" stroke-width=".7" fill="none"/><path d="M1.2 1.2L6.8 6.8" stroke="#a8d0f0" stroke-width=".8"/></svg></div><div class="a tname up">DR. RHAHIMI BINT...</div></div>
<div class="a tile" style="left:855.7px;top:367.5px;background:linear-gradient(160deg,#21505a 0%,#1a424b 100%)"><div class="a av" style="background:#4a6066;color:#fff">S</div><div class="a mute" style="background:#173a44"><svg width="8" height="8" viewBox="0 0 8 8"><path d="M4 1A1.1 1.1 0 0 1 5.1 2.1V4A1.1 1.1 0 0 1 2.9 4V2.1A1.1 1.1 0 0 1 4 1Z" fill="#9fd0dc"/><path d="M2 3.8A2 2 0 0 0 6 3.8M4 5.9V7" stroke="#9fd0dc" stroke-width=".7" fill="none"/><path d="M1.2 1.2L6.8 6.8" stroke="#9fd0dc" stroke-width=".8"/></svg></div><div class="a tname up">SYAHIDA BINTI AB...</div></div>
<div class="a tile" style="left:940px;top:367.5px;background:#4a4b4e"><div class="a" style="left:0;top:0;width:78px;height:64.5px;overflow:hidden;border-radius:5px"><div class="a" style="left:0;top:0;width:78px;height:64.5px;filter:blur(.9px)"><div class="a" style="left:0px;top:0px;width:78px;height:64.5px;background:#4a4b4e;"></div><div class="a" style="left:0px;top:9.5px;width:78px;height:44.5px;background:linear-gradient(90deg,#d6d2cc 0%,#e0dcd6 60%,#d8d6d0 100%);"></div><div class="a" style="left:0px;top:45px;width:22px;height:9px;background:#a89880;"></div><div class="a" style="left:4px;top:41px;width:14px;height:4px;background:#8a8070;opacity:.7"></div><div class="a" style="left:60px;top:22px;width:12px;height:10px;background:#3f6a2a;border-radius:0 80% 0 80%;transform:rotate(-20deg)"></div><div class="a" style="left:52px;top:30px;width:10px;height:7px;background:#4a7a30;border-radius:80% 0 80% 0"></div><div class="a" style="left:64px;top:32px;width:12px;height:8px;background:#3a6026;border-radius:80% 0 80% 0;transform:rotate(15deg)"></div><div class="a" style="left:61px;top:36px;width:3px;height:14px;background:#4a6a30;"></div><div class="a" style="left:18px;top:37px;width:46px;height:18px;background:#6a4fa0;border-radius:40% 40% 0 0"></div><div class="a" style="left:36px;top:38px;width:14px;height:17px;background:#1e1a1c;"></div><div class="a" style="left:28px;top:18px;width:24px;height:26px;background:#2a2426;border-radius:48% 48% 35% 35%"></div><div class="a" style="left:26px;top:25px;width:4px;height:9px;background:#222;border-radius:2px"></div><div class="a" style="left:50px;top:25px;width:4px;height:9px;background:#222;border-radius:2px"></div><div class="a" style="left:32px;top:22px;width:16px;height:18px;background:#c09888;border-radius:45% 45% 50% 50%"></div></div></div><div class="a mute" style="background:rgba(40,40,40,.85)"><svg width="8" height="8" viewBox="0 0 8 8"><path d="M4 1A1.1 1.1 0 0 1 5.1 2.1V4A1.1 1.1 0 0 1 2.9 4V2.1A1.1 1.1 0 0 1 4 1Z" fill="#e8e8e8"/><path d="M2 3.8A2 2 0 0 0 6 3.8M4 5.9V7" stroke="#e8e8e8" stroke-width=".7" fill="none"/><path d="M1.2 1.2L6.8 6.8" stroke="#e8e8e8" stroke-width=".8"/></svg></div><div class="a tname up">NORFAZLIANA BI...</div></div>
<!-- /GRID -->
</body></html>
